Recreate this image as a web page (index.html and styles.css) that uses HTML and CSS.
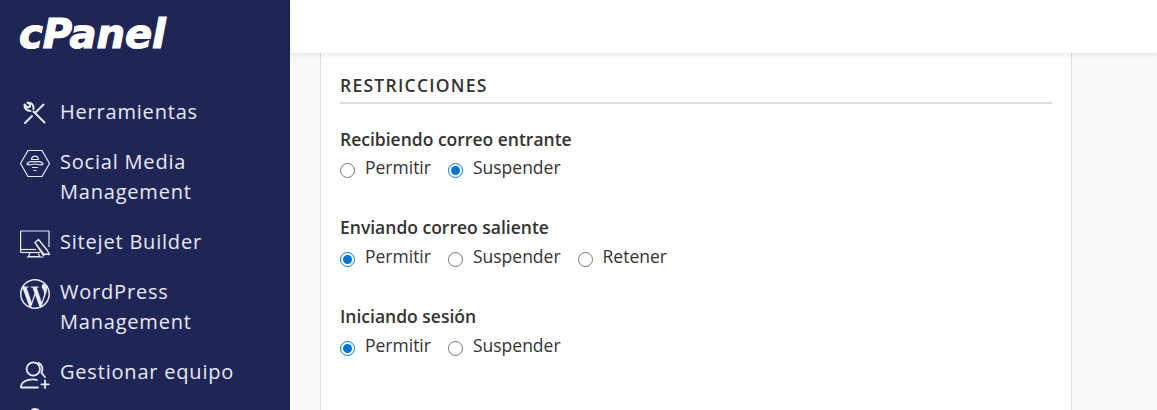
FILE: index.html
```html
<!DOCTYPE html>
<html lang="es">
<head>
  <meta charset="UTF-8">
  <title>cPanel - Restricciones</title>
  <link rel="stylesheet" href="styles.css">
</head>
<body>

  <!-- Sidebar -->
  <div class="sidebar">
    <div class="logo">cPanel</div>
    <div class="nav">
      <div class="nav-item">
        <svg class="nav-icon" viewBox="0 0 30 30" fill="none" stroke="currentColor" stroke-width="2" stroke-linecap="round" stroke-linejoin="round">
          <path d="M10.500 12 C7 12 4 9.500 4.500 5.500 L7.500 8.500 L10 7.500 L10 5 L7.500 3.800 C11.500 3 14 6 13.500 10"/>
          <path d="M13.500 12.500 L24.500 23.500"/>
          <path d="M5 24 L12 17"/>
          <path d="M16 13 L21 8 L23.500 5.500"/>
        </svg>
        <span>Herramientas</span>
      </div>
      <div class="nav-item">
        <svg class="nav-icon" viewBox="0 0 30 30" fill="none" stroke="currentColor" stroke-width="1.200" stroke-linecap="round" stroke-linejoin="round">
          <path d="M8 1.500 H22 L29.500 14.500 L22 27.500 H8 L0.500 14.500 Z"/>
          <path d="M11.500 10.500 C12 6 18 6 18.500 10.500 Z"/>
          <path d="M7 15 C8.500 11.500 11 12.800 15 12.800 C19 12.800 21.500 11.500 23 15 C21 17 18 15 15 15 C12 15 9 17 7 15 Z"/>
          <path d="M12.500 18.500 H17.500 M14 21.500 H16"/>
        </svg>
        <span>Social Media<br>Management</span>
      </div>
      <div class="nav-item">
        <svg class="nav-icon" viewBox="0 0 30 30" fill="none" stroke="currentColor" stroke-width="1.200" stroke-linejoin="round">
          <path d="M0.600 23.500 V2 H29 V18"/>
          <path d="M0.600 20.500 H16"/>
          <path d="M0.600 23.500 H20"/>
          <path d="M10 24 L8.500 27.500 H20 L18 24.500"/>
          <path d="M7 28 H23" stroke-linecap="round"/>
          <path d="M15 13.500 L18.500 10.500 L27 21 L29.500 25.500 L25 25 L23.500 26.500 Z" stroke-width="1.400"/>
          <path d="M16 15 L24 25"/>
        </svg>
        <span>Sitejet Builder</span>
      </div>
      <div class="nav-item">
        <svg class="nav-icon" viewBox="0 0 24 24" fill="currentColor">
          <path d="M21.469 6.825c.84 1.537 1.318 3.3 1.318 5.175 0 3.979-2.156 7.456-5.363 9.325l3.295-9.527c.615-1.54.82-2.771.82-3.864 0-.405-.026-.78-.07-1.11m-7.981.105c.647-.03 1.232-.105 1.232-.105.582-.075.514-.93-.067-.899 0 0-1.755.135-2.88.135-1.064 0-2.85-.15-2.85-.15-.585-.03-.661.855-.075.885 0 0 .54.061 1.125.09l1.68 4.605-2.37 7.08L5.354 6.9c.649-.03 1.234-.1 1.234-.1.585-.075.516-.93-.065-.896 0 0-1.746.138-2.874.138-.2 0-.438-.008-.69-.015C4.911 3.15 8.235 1.215 12 1.215c2.809 0 5.365 1.072 7.286 2.833-.046-.003-.091-.009-.141-.009-1.06 0-1.812.923-1.812 1.914 0 .89.513 1.643 1.06 2.531.411.72.89 1.643.89 2.977 0 .915-.354 1.994-.821 3.479l-1.075 3.585-3.9-11.61.001.014zM12 22.784c-1.059 0-2.081-.153-3.048-.437l3.237-9.406 3.315 9.087c.024.053.05.101.078.149-1.12.393-2.325.609-3.582.609M1.211 12c0-1.564.336-3.05.935-4.39L7.29 21.709C3.694 19.96 1.212 16.271 1.211 12M12 0C5.385 0 0 5.385 0 12s5.385 12 12 12 12-5.385 12-12S18.615 0 12 0"/>
        </svg>
        <span>WordPress<br>Management</span>
      </div>
      <div class="nav-item">
        <svg class="nav-icon" viewBox="0 0 30 30" fill="none" stroke="currentColor" stroke-width="1.800" stroke-linecap="round" stroke-linejoin="round">
          <circle cx="13.300" cy="10" r="6.700"/>
          <path d="M18.500 3.800 C22.500 5.500 23.500 10.500 21.500 14 L25 18"/>
          <path d="M17 21 C15.500 20.500 14.500 20.300 13 20.300 C7 20.300 1 23 1 28.500 H18"/>
          <path d="M25 21.500 V29 M21.300 25.300 H28.800"/>
        </svg>
        <span>Gestionar equipo</span>
      </div>
      <div class="nav-item">
        <svg class="nav-icon" viewBox="0 0 30 30" fill="none" stroke="currentColor" stroke-width="1.800">
          <circle cx="15" cy="6" r="6"/>
        </svg>
      </div>
    </div>
  </div>

  <!-- Main Area -->
  <div class="main">
    <div class="topbar"></div>
    <div class="content">
      <div class="card">
        <h2 class="card-title">Restricciones</h2>

        <div class="group">
          <div class="group-label">Recibiendo correo entrante</div>
          <div class="options">
            <label><input type="radio" name="incoming"> Permitir</label>
            <label><input type="radio" name="incoming" checked> Suspender</label>
          </div>
        </div>

        <div class="group">
          <div class="group-label">Enviando correo saliente</div>
          <div class="options">
            <label><input type="radio" name="outgoing" checked> Permitir</label>
            <label><input type="radio" name="outgoing"> Suspender</label>
            <label><input type="radio" name="outgoing"> Retener</label>
          </div>
        </div>

        <div class="group">
          <div class="group-label">Iniciando sesión</div>
          <div class="options">
            <label><input type="radio" name="login" checked> Permitir</label>
            <label><input type="radio" name="login"> Suspender</label>
          </div>
        </div>
      </div>
    </div>
  </div>

</body>
</html>
```

FILE: styles.css
```css
html {
  height: 100%;
  overflow: hidden;
}

body {
  margin: 0;
  font-family: 'Open Sans', sans-serif;
  background: #fafafa;
  color: #333;
  display: flex;
  height: 100%;
  overflow: hidden;
}

/* Sidebar */
.sidebar {
  width: 290px;
  flex-shrink: 0;
  background: #1f2555;
  color: #e8eaf4;
  overflow: hidden;
}

.logo {
  height: 65px;
  padding: 6px 0 0 19px;
  box-sizing: border-box;
  font-family: 'DejaVu Sans', sans-serif;
  font-size: 40px;
  font-weight: 700;
  font-style: italic;
  line-height: 56px;
  color: #fff;
  -webkit-text-stroke: 1.200px #fff;
}

.nav {
  padding: 32px 0 0 20px;
  display: flex;
  flex-direction: column;
  gap: 20px;
}

.nav-item {
  display: flex;
  align-items: flex-start;
  gap: 10px;
  font-size: 20px;
  line-height: 30px;
  letter-spacing: 0.800px;
  min-height: 30px;
}

.nav-icon {
  width: 30px;
  height: 30px;
  margin: 2px 0 -2px;
  flex-shrink: 0;
  overflow: visible;
}

/* Main */
.main {
  flex: 1;
  display: flex;
  flex-direction: column;
  min-width: 0;
}

.topbar {
  height: 53px;
  flex-shrink: 0;
  background: #fff;
  box-shadow: 0 1px 6px rgba(0, 0, 0, 0.12);
  position: relative;
}

.content {
  flex: 1;
  padding: 0 85px 0 30px;
  display: flex;
}

.card {
  flex: 1;
  background: #fff;
  border-left: 1px solid #ddd;
  border-right: 1px solid #ddd;
  padding: 19px 19px 0;
}

.card-title {
  margin: 0 0 22.600px;
  padding-bottom: 4px;
  font-size: 17.500px;
  font-weight: 600;
  line-height: 26px;
  letter-spacing: 1.260px;
  text-transform: uppercase;
  border-bottom: 2px solid #dcdcdc;
}

.group {
  margin-bottom: 30.800px;
}

.group-label {
  font-size: 17.500px;
  font-weight: 600;
  line-height: 24px;
}

.options {
  display: flex;
  gap: 17px;
  margin-top: 0.800px;
  font-size: 17.500px;
  line-height: 33px;
}

.options label {
  display: flex;
  align-items: center;
  gap: 10px;
}

.options input {
  width: 15px;
  height: 15px;
  margin: 6px 0 0;
  accent-color: #0075d6;
}
```
